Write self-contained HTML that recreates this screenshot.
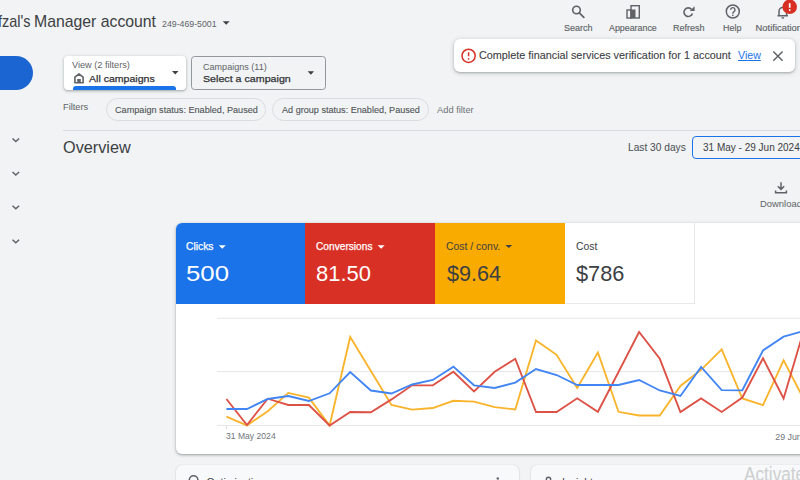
<!DOCTYPE html>
<html><head><meta charset="utf-8">
<style>
*{margin:0;padding:0;box-sizing:border-box}
html,body{width:800px;height:480px;overflow:hidden;background:#f1f3f4;font-family:"Liberation Sans",sans-serif;color:#3c4043}
.abs{position:absolute}
.t{position:absolute;white-space:nowrap;line-height:normal;transform-origin:0 0}
svg{position:absolute;overflow:visible}
</style></head><body>

<!-- header dropdown -->
<svg style="left:0;top:0" width="800" height="40">
  <path d="M222.8 21.2h6.8l-3.4 3.5z" fill="#3c4043"/>
  <!-- search -->
  <circle cx="576.5" cy="10" r="3.8" fill="none" stroke="#5f6368" stroke-width="1.6"/>
  <path d="M579.3 12.8L583.8 17.3" stroke="#5f6368" stroke-width="1.8" stroke-linecap="round"/>
  <!-- appearance -->
  <rect x="627" y="10" width="4" height="8" fill="none" stroke="#5f6368" stroke-width="1.4"/>
  <rect x="631" y="5.7" width="8.3" height="12.3" fill="none" stroke="#5f6368" stroke-width="1.4"/>
  <rect x="631" y="9.5" width="4.5" height="8.5" fill="#5f6368"/>
  <!-- refresh -->
  <path d="M691.6 9.4A4.3 4.3 0 1 0 692.4 13.4" fill="none" stroke="#5f6368" stroke-width="1.6"/>
  <path d="M694.6 6.2v4.8h-4.8z" fill="#5f6368"/>
  <!-- help -->
  <circle cx="732.8" cy="11.5" r="6.5" fill="none" stroke="#5f6368" stroke-width="1.5"/>
  <path d="M730.6 9.8a2.2 2.2 0 1 1 3.2 2c-0.9 0.5-1 1-1 1.9" fill="none" stroke="#5f6368" stroke-width="1.4"/>
  <circle cx="732.8" cy="15.4" r="0.8" fill="#5f6368"/>
  <!-- bell -->
  <path d="M777.5 15.8h10.5M779 15.8v-4.5a3.8 3.8 0 0 1 7.6 0v4.5" fill="none" stroke="#5f6368" stroke-width="1.5"/>
  <path d="M781.3 17.3h3a1.5 1.5 0 0 1 -3 0z" fill="#5f6368"/>
  <circle cx="789.7" cy="6.8" r="7.3" fill="#d93025"/>
  <path d="M789.7 3.2v4.6" stroke="#fff" stroke-width="1.7"/>
  <circle cx="789.7" cy="10" r="0.9" fill="#fff"/>
</svg>

<!-- toast -->
<div class="abs" style="left:454px;top:39px;width:341px;height:33px;background:#fff;border-radius:6px;box-shadow:0 1px 2px rgba(60,64,67,.3),0 1px 4px 1px rgba(60,64,67,.15)"></div>
<svg style="left:0;top:0" width="800" height="80">
  <circle cx="468.6" cy="55.8" r="6.6" fill="none" stroke="#d93025" stroke-width="1.5"/>
  <path d="M468.6 52.3v4" stroke="#d93025" stroke-width="1.5"/>
  <circle cx="468.6" cy="58.8" r="0.85" fill="#d93025"/>
  <path d="M773.3 51.5l9.3 9.2M782.6 51.5l-9.3 9.2" stroke="#5f6368" stroke-width="1.5"/>
</svg>

<!-- left pill -->
<div class="abs" style="left:-20px;top:55.8px;width:52.6px;height:34px;background:#1a65d2;border-radius:17px"></div>
<svg style="left:0;top:0" width="40" height="260">
  <path d="M12.5 138.5l3.3 3 3.3-3M12.5 172l3.3 3 3.3-3M12.5 205.8l3.3 3 3.3-3M12.5 239.8l3.3 3 3.3-3" fill="none" stroke="#5f6368" stroke-width="1.5"/>
</svg>

<!-- view box -->
<div class="abs" style="left:63.7px;top:56px;width:122.3px;height:34px;background:#fff;border-radius:4px;box-shadow:0 1px 2px rgba(60,64,67,.3),0 1px 3px 1px rgba(60,64,67,.12);overflow:hidden">
  <div class="abs" style="left:9.3px;top:30px;width:103px;height:6px;background:#1a73e8;border-radius:3px"></div>
</div>
<svg style="left:0;top:0" width="340" height="100">
  <path d="M74.9 82.8v-5.6l4.1-3.2 4.1 3.2v5.6z" fill="none" stroke="#5f6368" stroke-width="1.6" stroke-linejoin="round"/>
  <rect x="77.2" y="79" width="3.6" height="4" fill="#5f6368"/>
  <path d="M172 71h6.5l-3.25 3.5z" fill="#3c4043"/>
  <path d="M307.6 71.2h6.5l-3.25 3.5z" fill="#3c4043"/>
</svg>
<div class="abs" style="left:191px;top:55.7px;width:134.6px;height:34px;border:1.3px solid #93979c;border-radius:3.5px"></div>

<!-- chips -->
<div class="abs" style="left:105.9px;top:98.2px;width:160.3px;height:22.6px;border:1px solid #dadce0;border-radius:12px"></div>
<div class="abs" style="left:271.9px;top:98.2px;width:157.3px;height:22.6px;border:1px solid #dadce0;border-radius:12px"></div>
<div class="abs" style="left:63.4px;top:130px;width:740px;height:1px;background:#dadce0"></div>

<!-- date -->
<div class="abs" style="left:692px;top:136.3px;width:130px;height:22.3px;border:1.5px solid #1a73e8;border-radius:4px"></div>
<svg style="left:0;top:0" width="800" height="210">
  <path d="M781 182.2v6.8M777.8 186.2l3.2 3.2 3.2-3.2M775.6 190.5v2.2h10.8v-2.2" fill="none" stroke="#5f6368" stroke-width="1.5"/>
</svg>

<!-- main card -->
<div class="abs" style="left:175.5px;top:222.6px;width:660px;height:231.4px;background:#fff;border-radius:6px;box-shadow:0 1px 2px rgba(60,64,67,.3),0 1px 3px 1px rgba(60,64,67,.15);overflow:hidden">
  <div class="abs" style="left:0;top:0;width:129.7px;height:81.3px;background:#1a73e8"></div>
  <div class="abs" style="left:129.7px;top:0;width:129.8px;height:81.3px;background:#d93025"></div>
  <div class="abs" style="left:259.5px;top:0;width:129.8px;height:81.3px;background:#f9ab00"></div>
  <div class="abs" style="left:389.3px;top:0;width:129.9px;height:81.9px;border-right:1px solid #e8e8e8;border-bottom:1px solid #e8e8e8"></div>
</div>
<svg style="left:0;top:0" width="800" height="480">
  <path d="M218.75 245.2h7l-3.5 3.5z" fill="#fff"/>
  <path d="M377.6 245.2h7l-3.5 3.5z" fill="#fff"/>
  <path d="M505.3 245h7l-3.5 3z" fill="#3c4043"/>
  <g stroke="#e6e6e6" stroke-width="1">
    <path d="M217 318.3H800M217 371.6H800M217 425.4H800"/>
  </g>
  <path d="M226.4 426v3" stroke="#dadce0" stroke-width="1"/>
  <!--CHART-->
  <polyline points="226.4,416.6 247.0,425.4 267.7,411.2 288.3,392.9 308.9,397.6 329.6,425.5 350.2,337.0 370.9,371.0 391.5,404.9 412.1,409.6 432.8,408.0 453.4,400.8 474.0,401.7 494.7,407.2 515.3,409.4 536.0,340.4 556.6,354.8 577.2,388.0 597.9,352.5 618.5,411.8 639.1,415.5 659.8,415.5 680.4,386.0 701.1,369.8 721.7,349.4 742.3,398.5 763.0,405.2 783.6,360.4 804.2,400.0 824.9,390.0" fill="none" stroke="#fab42c" stroke-width="1.85" stroke-linejoin="miter"/>
  <polyline points="226.4,399.0 247.0,425.0 267.7,398.7 288.3,405.0 308.9,405.0 329.6,425.5 350.2,412.0 370.9,412.2 391.5,399.4 412.1,385.3 432.8,385.3 453.4,371.8 474.0,391.4 494.7,371.8 515.3,358.8 536.0,412.0 556.6,412.0 577.2,398.3 597.9,411.8 618.5,372.0 639.1,332.0 659.8,358.8 680.4,412.0 701.1,398.4 721.7,412.0 742.3,397.5 763.0,358.3 783.6,398.5 804.2,329.0 824.9,330.0" fill="none" stroke="#dd5246" stroke-width="1.85" stroke-linejoin="miter"/>
  <polyline points="226.4,409.0 247.0,409.0 267.7,399.0 288.3,396.0 308.9,401.0 329.6,393.3 350.2,372.0 370.9,390.5 391.5,393.5 412.1,384.5 432.8,380.0 453.4,366.6 474.0,385.3 494.7,388.0 515.3,382.6 536.0,369.0 556.6,375.0 577.2,385.0 597.9,385.0 618.5,385.0 639.1,380.0 659.8,390.5 680.4,396.0 701.1,366.9 721.7,390.2 742.3,390.3 763.0,350.5 783.6,336.7 804.2,330.8 824.9,328.0" fill="none" stroke="#4285f4" stroke-width="1.85" stroke-linejoin="miter"/>
  <!--/CHART-->
</svg>

<!-- bottom cards -->
<div class="abs" style="left:176px;top:464.5px;width:343px;height:40px;background:#f8f9fa;border-radius:6px;box-shadow:0 1px 2px rgba(60,64,67,.2),0 0 1px 0 rgba(60,64,67,.2)"></div>
<div class="abs" style="left:531px;top:464.5px;width:300px;height:40px;background:#f8f9fa;border-radius:6px;box-shadow:0 1px 2px rgba(60,64,67,.2),0 0 1px 0 rgba(60,64,67,.2)"></div>

<svg style="left:0;top:0" width="800" height="480">
  <circle cx="193.6" cy="480" r="4.3" fill="none" stroke="#5f6368" stroke-width="1.6"/>
  <circle cx="497.8" cy="478.5" r="1.2" fill="#5f6368"/>
  <circle cx="548.5" cy="479.5" r="2.2" fill="none" stroke="#5f6368" stroke-width="1.4"/>
</svg>
<div class="t" style="left:206.5px;top:476px;font-size:10.5px;color:#3c4043">Optimisation score</div>
<div class="t" style="left:562px;top:476px;font-size:10.5px;color:#3c4043">Insights</div>
<div class="t" style="left:-2.4px;top:11.83px;font-size:16.81px;color:#3c4043;transform:scaleX(0.86)">fzal&#39;s</div>
<div class="t" style="left:34.04px;top:11.83px;font-size:16.81px;font-weight:400;color:#3c4043;transform:scaleX(0.94);">Manager account</div>
<div class="t" style="left:162.26px;top:18.07px;font-size:9.71px;font-weight:400;color:#5f6368;transform:scaleX(0.904);">249-469-5001</div>
<div class="t" style="left:564.15px;top:22.23px;font-size:9.42px;font-weight:400;color:#5f6368;transform:scaleX(0.954);-webkit-text-stroke:0.15px currentColor;">Search</div>
<div class="t" style="left:609.00px;top:22.23px;font-size:9.42px;font-weight:400;color:#5f6368;transform:scaleX(0.942);-webkit-text-stroke:0.15px currentColor;">Appearance</div>
<div class="t" style="left:672.88px;top:22.23px;font-size:9.42px;font-weight:400;color:#5f6368;transform:scaleX(0.96);-webkit-text-stroke:0.15px currentColor;">Refresh</div>
<div class="t" style="left:722.98px;top:22.23px;font-size:9.42px;font-weight:400;color:#5f6368;transform:scaleX(0.952);-webkit-text-stroke:0.15px currentColor;">Help</div>
<div class="t" style="left:479.26px;top:49.87px;font-size:10.14px;font-weight:400;color:#3c4043;transform:scaleX(1.068);-webkit-text-stroke:0.10px currentColor;">Complete financial services verification for 1 account</div>
<div class="t" style="left:737.89px;top:49.47px;font-size:10.58px;font-weight:400;color:#1a73e8;transform:scaleX(1.003);text-decoration:underline;">View</div>
<div class="t" style="left:72.16px;top:59.97px;font-size:9.28px;font-weight:400;color:#5f6368;transform:scaleX(0.989);">View (2 filters)</div>
<div class="t" style="left:89.10px;top:72.97px;font-size:9.71px;font-weight:400;color:#303134;transform:scaleX(1.088);-webkit-text-stroke:0.25px currentColor;">All campaigns</div>
<div class="t" style="left:203.35px;top:60.60px;font-size:9.57px;font-weight:400;color:#5f6368;transform:scaleX(0.947);">Campaigns (11)</div>
<div class="t" style="left:203.27px;top:73.03px;font-size:9.86px;font-weight:400;color:#303134;transform:scaleX(1.084);-webkit-text-stroke:0.25px currentColor;">Select a campaign</div>
<div class="t" style="left:63.06px;top:100.73px;font-size:9.86px;font-weight:400;color:#5f6368;transform:scaleX(0.941);">Filters</div>
<div class="t" style="left:114.54px;top:103.83px;font-size:9.42px;font-weight:400;color:#4f5357;transform:scaleX(0.969);-webkit-text-stroke:0.10px currentColor;">Campaign status: Enabled, Paused</div>
<div class="t" style="left:281.50px;top:103.83px;font-size:9.42px;font-weight:400;color:#4f5357;transform:scaleX(0.966);-webkit-text-stroke:0.10px currentColor;">Ad group status: Enabled, Paused</div>
<div class="t" style="left:437.40px;top:104.97px;font-size:9.28px;font-weight:400;color:#6f7378;transform:scaleX(1.004);">Add filter</div>
<div class="t" style="left:62.59px;top:137.73px;font-size:16.38px;font-weight:400;color:#3c4043;transform:scaleX(0.993);">Overview</div>
<div class="t" style="left:627.78px;top:141.67px;font-size:10.14px;font-weight:400;color:#4a4e52;transform:scaleX(1.007);">Last 30 days</div>
<div class="t" style="left:702.50px;top:141.00px;font-size:10.87px;font-weight:400;color:#3c4043;transform:scaleX(0.921);">31 May - 29 Jun 2024</div>
<div class="t" style="left:760.25px;top:197.80px;font-size:9.57px;font-weight:400;color:#5f6368;transform:scaleX(0.985);">Download</div>
<div class="t" style="left:186.38px;top:240.27px;font-size:10.58px;font-weight:400;color:#fff;transform:scaleX(0.975);-webkit-text-stroke:0.25px currentColor;">Clicks</div>
<div class="t" style="left:185.87px;top:261.10px;font-size:22.61px;font-weight:400;color:#fff;transform:scaleX(1.141);">500</div>
<div class="t" style="left:315.89px;top:240.27px;font-size:10.58px;font-weight:400;color:#fff;transform:scaleX(0.961);-webkit-text-stroke:0.25px currentColor;">Conversions</div>
<div class="t" style="left:315.52px;top:260.87px;font-size:22.32px;font-weight:400;color:#fff;transform:scaleX(0.985);">81.50</div>
<div class="t" style="left:446.38px;top:240.70px;font-size:10.00px;font-weight:400;color:#3c4043;transform:scaleX(1.042);">Cost / conv.</div>
<div class="t" style="left:446.88px;top:260.87px;font-size:22.32px;font-weight:400;color:#3c4043;transform:scaleX(0.967);">$9.64</div>
<div class="t" style="left:575.78px;top:240.70px;font-size:10.00px;font-weight:400;color:#3c4043;transform:scaleX(1.035);">Cost</div>
<div class="t" style="left:576.08px;top:260.87px;font-size:22.32px;font-weight:400;color:#3c4043;transform:scaleX(0.975);">$786</div>
<div class="t" style="left:226.16px;top:431.47px;font-size:8.84px;font-weight:400;color:#70757a;transform:scaleX(0.973);">31 May 2024</div>
<div class="t" style="left:775.26px;top:431.67px;font-size:8.84px;font-weight:400;color:#70757a;transform:scaleX(1.0);">29 Jun 2024</div>
<div class="t" style="left:755.55px;top:22.23px;font-size:9.42px;font-weight:400;color:#5f6368;transform:scaleX(1.0);-webkit-text-stroke:0.15px currentColor;">Notifications</div>
<div class="t" style="left:743.5px;top:462.5px;font-size:20px;color:#cdcfd1;transform:scaleX(0.86)">Activate</div>
</body></html>
